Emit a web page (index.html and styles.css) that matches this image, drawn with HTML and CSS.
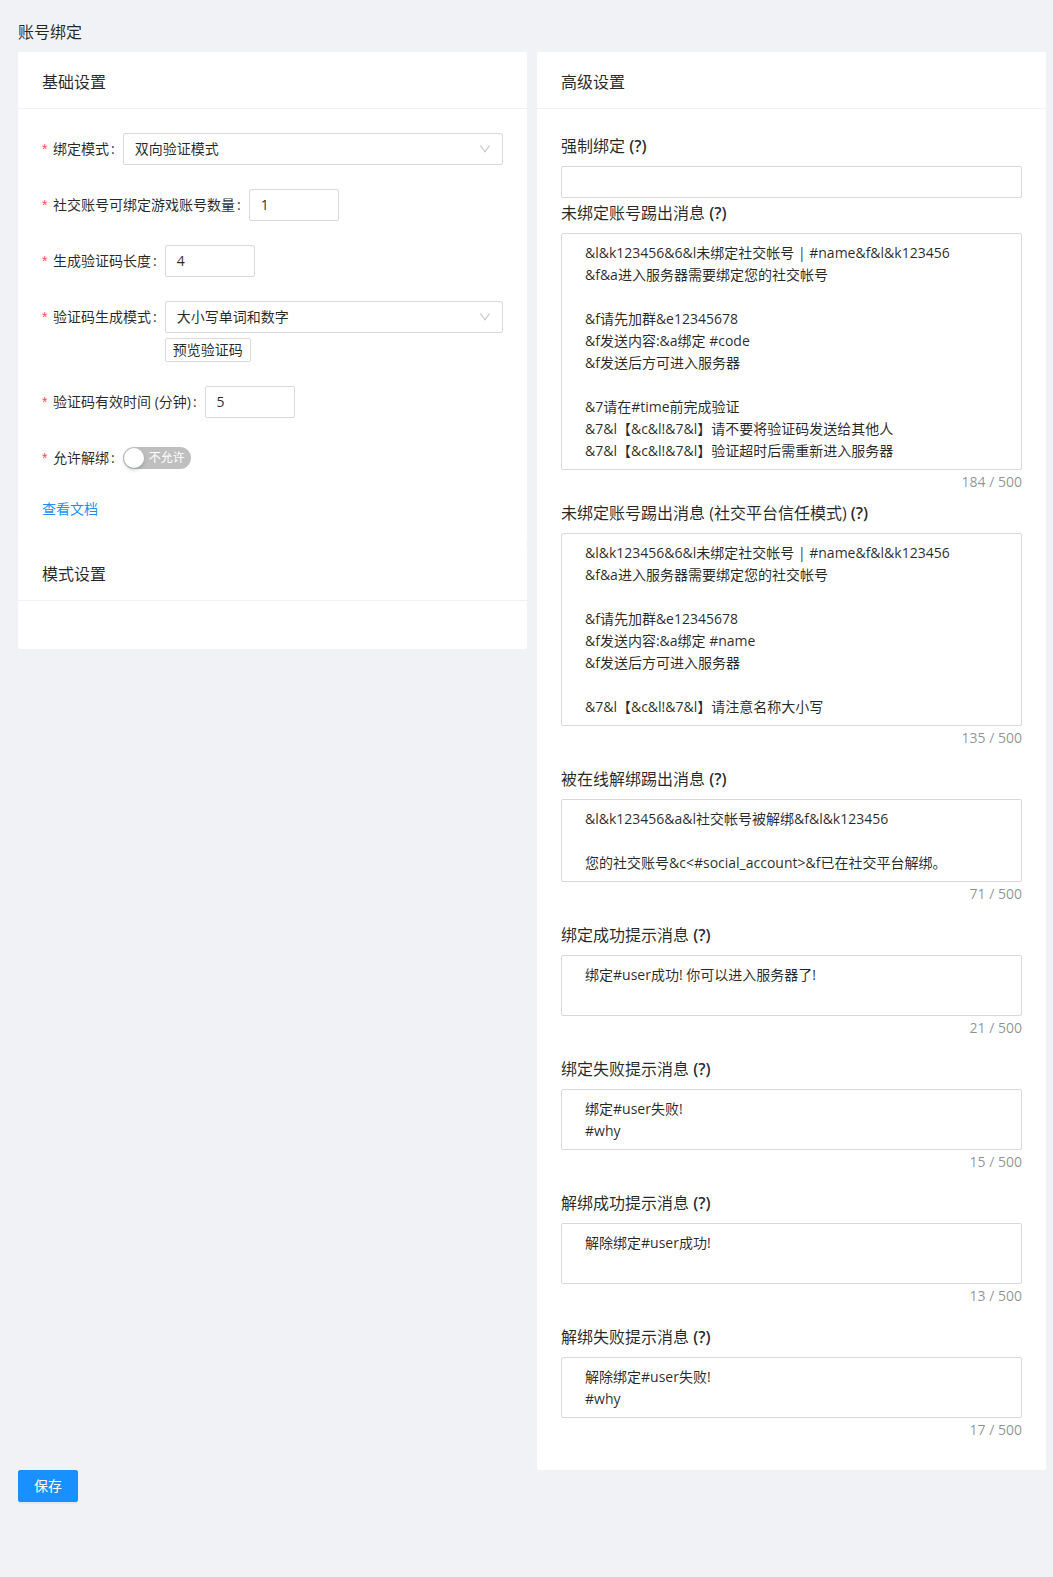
FILE: index.html
```html
<!DOCTYPE html>
<html lang="zh-CN">
<head>
<meta charset="utf-8">
<title>账号绑定</title>
<link rel="stylesheet" href="styles.css">
</head>
<body>
<div class="page">
  <h1 class="page-title">账号绑定</h1>
  <div class="columns">
    <div class="col">
      <section class="card">
        <div class="card-head"><h2 class="card-title">基础设置</h2></div>
        <div class="card-body">
          <div class="h-item">
            <label class="h-label"><span class="req">*</span>绑定模式<span class="colon">:</span></label>
            <div class="h-control">
              <div class="select"><span>双向验证模式</span><svg class="arrow" viewBox="64 64 896 896" width="12" height="12"><path fill="currentColor" d="M884 256h-75c-5.1 0-9.9 2.5-12.9 6.6L512 654.2 227.9 262.6c-3-4.1-7.8-6.6-12.9-6.6h-75c-6.5 0-10.300 7.4-6.5 12.7l352.6 486.1c12.8 17.6 39 17.6 51.7 0l352.6-486.1c3.9-5.3.1-12.7-6.4-12.7z"/></svg></div>
            </div>
          </div>
          <div class="h-item">
            <label class="h-label"><span class="req">*</span>社交账号可绑定游戏账号数量<span class="colon">:</span></label>
            <div class="h-control"><div class="num-input">1</div></div>
          </div>
          <div class="h-item">
            <label class="h-label"><span class="req">*</span>生成验证码长度<span class="colon">:</span></label>
            <div class="h-control"><div class="num-input">4</div></div>
          </div>
          <div class="h-item">
            <label class="h-label"><span class="req">*</span>验证码生成模式<span class="colon">:</span></label>
            <div class="h-control">
              <div class="select"><span>大小写单词和数字</span><svg class="arrow" viewBox="64 64 896 896" width="12" height="12"><path fill="currentColor" d="M884 256h-75c-5.1 0-9.9 2.5-12.9 6.6L512 654.2 227.9 262.6c-3-4.1-7.8-6.6-12.9-6.6h-75c-6.5 0-10.300 7.4-6.5 12.7l352.6 486.1c12.8 17.6 39 17.6 51.7 0l352.6-486.1c3.9-5.3.1-12.7-6.4-12.7z"/></svg></div>
              <button class="btn-sm" type="button">预览验证码</button>
            </div>
          </div>
          <div class="h-item">
            <label class="h-label"><span class="req">*</span>验证码有效时间 (分钟)<span class="colon">:</span></label>
            <div class="h-control"><div class="num-input">5</div></div>
          </div>
          <div class="h-item">
            <label class="h-label"><span class="req">*</span>允许解绑<span class="colon">:</span></label>
            <div class="h-control">
              <span class="switch"><span class="switch-handle"></span><span class="switch-inner">不允许</span></span>
            </div>
          </div>
          <div class="link-row"><a class="doc-link" href="#">查看文档</a></div>
        </div>
      </section>
      <section class="card">
        <div class="card-head"><h2 class="card-title">模式设置</h2></div>
        <div class="card-body empty"></div>
      </section>
    </div>
    <div class="col">
      <section class="card">
        <div class="card-head"><h2 class="card-title">高级设置</h2></div>
        <div class="card-body adv">
          <div class="v-item tight">
            <div class="v-label">强制绑定 <b class="q">(?)</b></div>
            <div class="text-input"></div>
          </div>
          <div class="v-item short">
            <div class="v-label">未绑定账号踢出消息 <b class="q">(?)</b></div>
            <textarea class="ta ta-r10">&amp;l&amp;k123456&amp;6&amp;l未绑定社交帐号 | #name&amp;f&amp;l&amp;k123456
&amp;f&amp;a进入服务器需要绑定您的社交帐号

&amp;f请先加群&amp;e12345678
&amp;f发送内容:&amp;a绑定 #code
&amp;f发送后方可进入服务器

&amp;7请在#time前完成验证
&amp;7&amp;l【&amp;c&amp;l!&amp;7&amp;l】请不要将验证码发送给其他人
&amp;7&amp;l【&amp;c&amp;l!&amp;7&amp;l】验证超时后需重新进入服务器</textarea>
            <div class="count">184 / 500</div>
          </div>
          <div class="v-item">
            <div class="v-label">未绑定账号踢出消息 (社交平台信任模式) <b class="q">(?)</b></div>
            <textarea class="ta ta-r8">&amp;l&amp;k123456&amp;6&amp;l未绑定社交帐号 | #name&amp;f&amp;l&amp;k123456
&amp;f&amp;a进入服务器需要绑定您的社交帐号

&amp;f请先加群&amp;e12345678
&amp;f发送内容:&amp;a绑定 #name
&amp;f发送后方可进入服务器

&amp;7&amp;l【&amp;c&amp;l!&amp;7&amp;l】请注意名称大小写</textarea>
            <div class="count">135 / 500</div>
          </div>
          <div class="v-item">
            <div class="v-label">被在线解绑踢出消息 <b class="q">(?)</b></div>
            <textarea class="ta ta-r3">&amp;l&amp;k123456&amp;a&amp;l社交帐号被解绑&amp;f&amp;l&amp;k123456

您的社交账号&amp;c&lt;#social_account&gt;&amp;f已在社交平台解绑。</textarea>
            <div class="count">71 / 500</div>
          </div>
          <div class="v-item">
            <div class="v-label">绑定成功提示消息 <b class="q">(?)</b></div>
            <textarea class="ta ta-r2">绑定#user成功! 你可以进入服务器了!</textarea>
            <div class="count">21 / 500</div>
          </div>
          <div class="v-item">
            <div class="v-label">绑定失败提示消息 <b class="q">(?)</b></div>
            <textarea class="ta ta-r2">绑定#user失败!
#why</textarea>
            <div class="count">15 / 500</div>
          </div>
          <div class="v-item">
            <div class="v-label">解绑成功提示消息 <b class="q">(?)</b></div>
            <textarea class="ta ta-r2">解除绑定#user成功!</textarea>
            <div class="count">13 / 500</div>
          </div>
          <div class="v-item">
            <div class="v-label">解绑失败提示消息 <b class="q">(?)</b></div>
            <textarea class="ta ta-r2">解除绑定#user失败!
#why</textarea>
            <div class="count">17 / 500</div>
          </div>
        </div>
      </section>
    </div>
  </div>
  <div class="actions"><button class="btn-primary" type="button">保存</button></div>
</div>
</body>
</html>
```
FILE: styles.css
```css
* { box-sizing: border-box; }
html, body { margin: 0; padding: 0; }
body {
  background: #f0f2f5;
  font-family: "Open Sans", "Noto Sans CJK SC", sans-serif;
  font-size: 14px;
  color: rgba(0, 0, 0, 0.85);
  min-height: 1577px;
}
.page { padding: 0 7px 0 18px; }
.page-title {
  margin: 0;
  padding: 20px 0 8px;
  font-size: 16px;
  line-height: 24px;
  font-weight: 400;
  color: rgba(0, 0, 0, 0.85);
}
.columns {
  display: grid;
  grid-template-columns: 1fr 1fr;
  gap: 10px;
  align-items: start;
}
.col { display: flex; flex-direction: column; }
.card { background: #fff; border-radius: 2px; }
.card-head { padding: 0 24px; border-bottom: 1px solid #f0f0f0; }
.card-title {
  margin: 0;
  padding: 18px 0 14px;
  font-size: 16px;
  line-height: 24px;
  font-weight: 400;
  color: rgba(0, 0, 0, 0.85);
}
.card-body { padding: 24px; }
.card-body.empty { height: 48px; }
.card-body.adv { padding: 24px 24px 12px; }

/* horizontal form */
.h-item { display: flex; align-items: flex-start; margin-bottom: 24px; }
.h-label { flex: none; line-height: 32px; white-space: nowrap; }
.req {
  display: inline-block;
  width: 7px;
  margin-right: 4px;
  color: #ff4d4f;
  font-family: "Liberation Sans", sans-serif;
}
.colon { margin: 0 8px 0 2px; }
.h-control { flex: 1; min-width: 0; min-height: 32px; display: flex; flex-direction: column; align-items: flex-start; justify-content: center; }
.select {
  width: 100%;
  height: 32px;
  padding: 0 11px;
  border: 1px solid #d9d9d9;
  border-radius: 2px;
  display: flex;
  align-items: center;
  justify-content: space-between;
  line-height: 30px;
}
.arrow { color: rgba(0, 0, 0, 0.25); flex: none; }
.num-input {
  width: 90px;
  height: 32px;
  padding: 0 11px;
  border: 1px solid #d9d9d9;
  border-radius: 2px;
  line-height: 30px;
}
.btn-sm {
  margin-top: 5px;
  height: 24px;
  padding: 0 7px;
  border: 1px solid #d9d9d9;
  border-radius: 2px;
  background: #fff;
  font-family: inherit;
  font-size: 14px;
  line-height: 22px;
  color: rgba(0, 0, 0, 0.85);
}
.switch {
  position: relative;
  display: inline-block;
  height: 22px;
  min-width: 44px;
  border-radius: 100px;
  background: rgba(0, 0, 0, 0.25);
}
.switch-handle {
  position: absolute;
  top: 1px;
  left: 1px;
  width: 20px;
  height: 20px;
  border-radius: 50%;
  background: #fff;
  box-shadow: 0 2px 4px 0 rgba(0, 35, 11, 0.2);
}
.switch-inner {
  display: block;
  margin: 0 6px 0 26px;
  font-size: 12px;
  line-height: 22px;
  color: #fff;
}
.link-row { line-height: 22px; }
.doc-link { color: #1890ff; text-decoration: none; }

/* vertical form */
.v-item { margin-bottom: 18px; }
.v-item.tight { margin-bottom: 2px; }
.v-item.short { margin-bottom: 8px; }
.v-label { font-size: 16px; line-height: 25px; padding: 1px 0 7px; }
.q { font-weight: 600; }
.text-input {
  height: 32px;
  border: 1px solid #d9d9d9;
  border-radius: 2px;
}
.ta {
  display: block;
  width: 100%;
  margin: 0;
  padding: 8px 23px 7px;
  border: 1px solid #d9d9d9;
  border-radius: 2px;
  font-family: inherit;
  font-size: 14px;
  line-height: 22px;
  color: rgba(0, 0, 0, 0.85);
  background: #fff;
  resize: none;
  overflow: hidden;
}
.ta-r10 { height: 237px; }
.ta-r8 { height: 193px; }
.ta-r3 { height: 83px; }
.ta-r2 { height: 61px; }
.count { text-align: right; padding-top: 1px; line-height: 21px; color: rgba(0, 0, 0, 0.45); }

.btn-primary {
  height: 32px;
  padding: 4px 15px;
  border: 1px solid #1890ff;
  border-radius: 2px;
  background: #1890ff;
  color: #fff;
  font-family: inherit;
  font-size: 14px;
  line-height: 22px;
  box-shadow: 0 2px 0 rgba(0, 0, 0, 0.045);
}
```
